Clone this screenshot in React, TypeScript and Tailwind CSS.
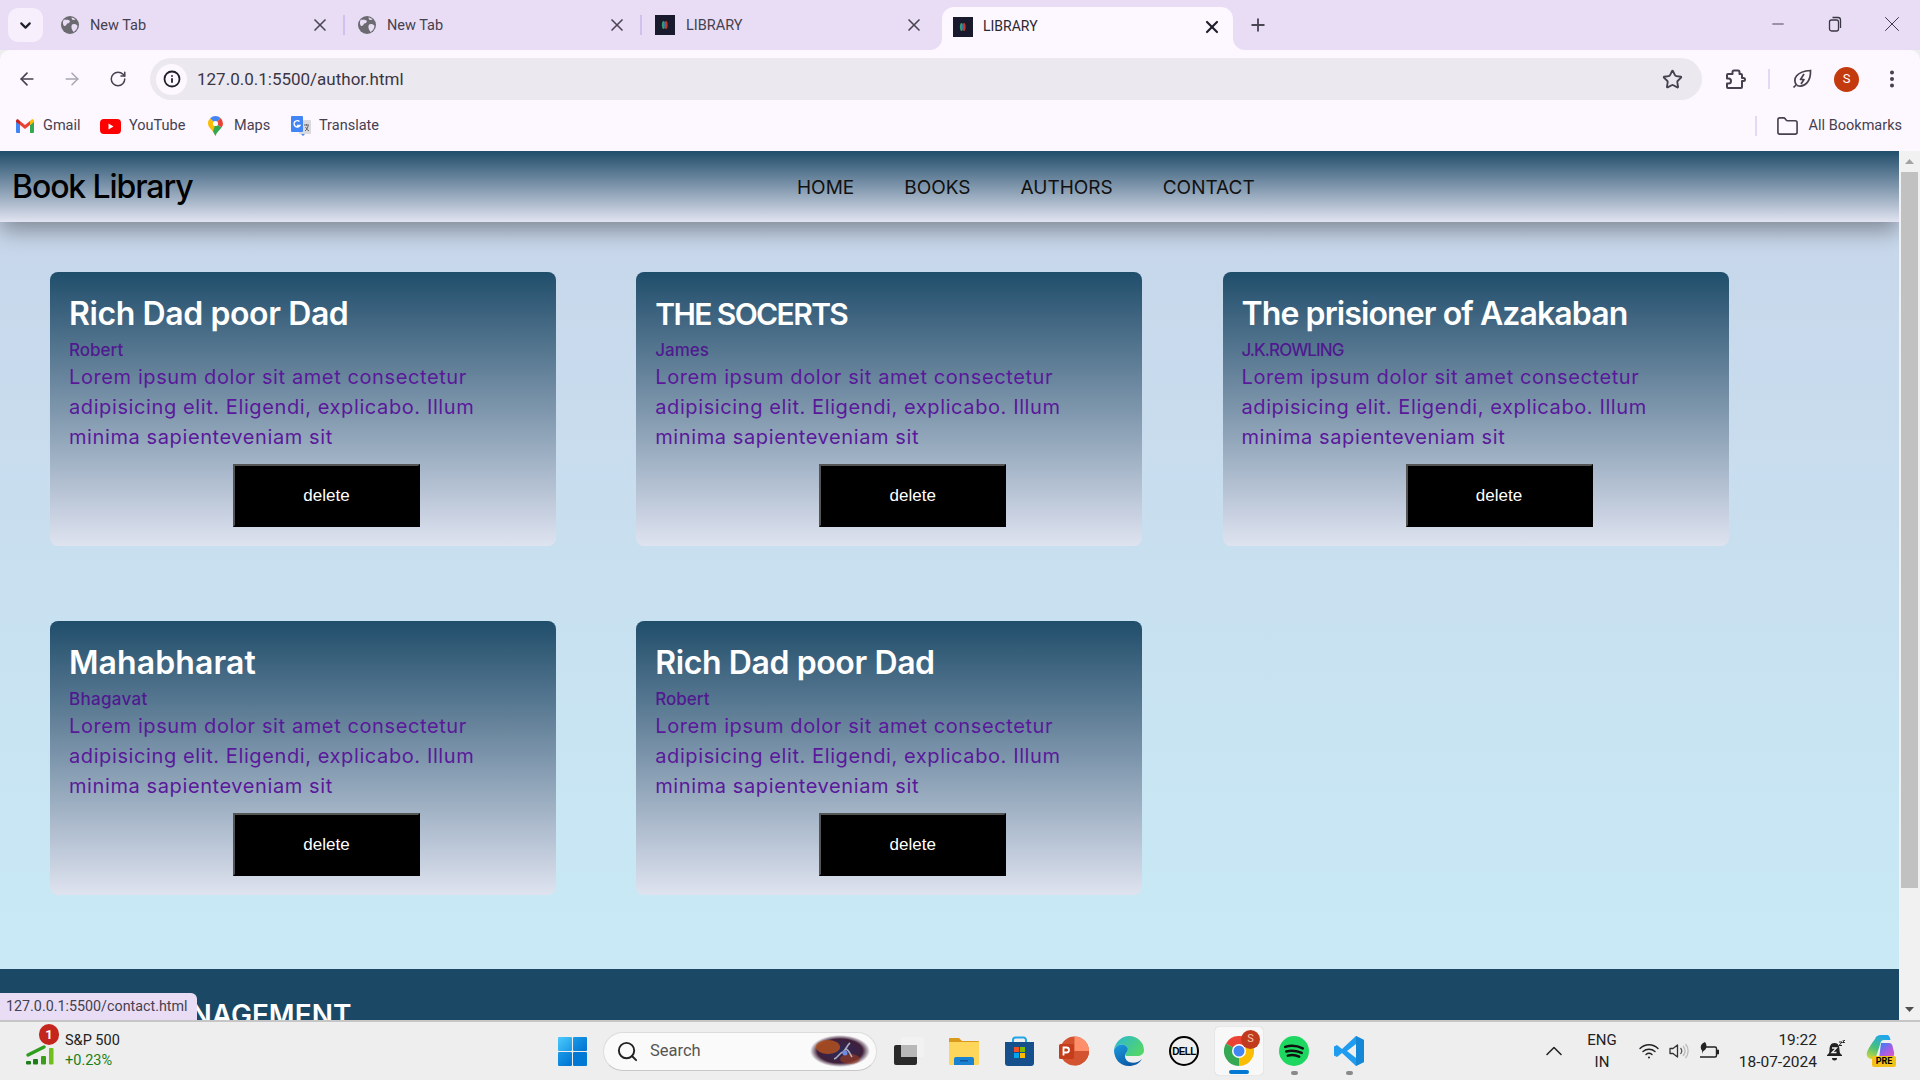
import React from "react";
import { ArrowLeft, ArrowRight, RotateCw, Info, Star, EllipsisVertical, X, Plus, ChevronDown, ChevronUp, Minus, Folder, Search } from "lucide-react";

const ui = "font-['Roboto','Liberation_Sans',sans-serif]";
const pg = "font-['Inter','Open_Sans',sans-serif]";

const Favicon = () => (
  <svg width="20" height="20" viewBox="0 0 20 20" className="shrink-0">
    <rect width="20" height="20" fill="#1a1a2e" />
    <ellipse cx="8.5" cy="10" rx="1.6" ry="4" fill="#2e9e6b" />
    <ellipse cx="11" cy="10" rx="1.6" ry="4" fill="#c0392b" />
    <ellipse cx="10" cy="10" rx="0.9" ry="3" fill="#2b6fbf" />
  </svg>
);

const Tab = ({ title, icon, sep }: { title: string; icon: React.ReactNode; sep?: boolean }) => (
  <div className="w-[297px] h-[34px] mt-[8px] flex items-center relative shrink-0">
    <div className="w-[13px] shrink-0" />
    {icon}
    <span className="ml-[11px] mt-[1px] text-[14.5px] text-[#45414f] flex-1">{title}</span>
    <X size={20} strokeWidth={2} className="text-[#4a4654] mr-[15px]" />
    {sep && <div className="w-[2px] h-[20px] bg-[#cfc0f0] absolute right-0 top-[7px]" />}
  </div>
);

const GlobeIcon = () => (
  <svg width="18" height="18" viewBox="0 0 18 18" className="shrink-0">
    <circle cx="9" cy="9" r="9" fill="#6a6a70" />
    <path d="M3 3.500c2 .5 4-.5 5.500 1 1 1.500-.5 3-2.500 3-.5 1.500-1.500 3-3 2.500C1.500 8 1.500 5.500 3 3.500z" fill="#e9ddf5" />
    <path d="M11 8.500c2-1 4-.5 5.500 1 0 3-2 5.500-4 6.500-1-2-3-4-1.500-7.500z" fill="#e9ddf5" />
    <path d="M10.500 1.500c1.500.3 3 1 4 2-1 .5-2.500.5-3.500 0z" fill="#e9ddf5" />
  </svg>
);

const Gmail = () => (
  <svg width="18" height="14" viewBox="0 0 18 14">
    <path d="M0 2v11a1 1 0 0 0 1 1h3V6z" fill="#4285f4" />
    <path d="M18 2v11a1 1 0 0 1-1 1h-3V6z" fill="#34a853" />
    <path d="M4 2 9 6l5-4v4L9 10 4 6z" fill="#ea4335" />
    <path d="M14 2l1.600-1.400c.9-.7 2.400 0 2.400 1.300V3l-4 3z" fill="#fbbc04" />
    <path d="M4 2 2.400.6C1.500-.1 0 .6 0 1.900V3l4 3z" fill="#c5221f" />
  </svg>
);
const Youtube = () => (
  <svg width="21" height="15" viewBox="0 0 21 15">
    <rect width="21" height="15" rx="4" fill="#f00" />
    <path d="M8.500 4.500v6l5-3z" fill="#fff" />
  </svg>
);
const Maps = () => (
  <svg width="15" height="20" viewBox="0 0 15 20">
    <path d="M7.500 20C6 15 0 12 0 7.500a7.400 7.400 0 0 1 2.200-5.300L7.500 7.500z" fill="#fbbc04" />
    <path d="M2.200 2.200A7.500 7.500 0 0 1 7.500 0c2 0 3.700.8 5 2L7.500 7.500z" fill="#4285f4" />
    <path d="M12.500 2A7.400 7.400 0 0 1 15 7.500c0 1.500-.6 2.800-1.400 4L7.500 7.500z" fill="#ea4335" />
    <path d="M13.600 11.500C11.500 14.500 8.500 16.500 7.500 20L5 15.500l2.500-8z" fill="#34a853" />
    <circle cx="7.500" cy="7.500" r="2.600" fill="#fff" />
  </svg>
);
const Translate = () => (
  <svg width="20" height="20" viewBox="0 0 20 20">
    <rect x="8" y="4" width="12" height="14" rx="1" fill="#d9d9de" />
    <path d="M10 18l2 2 2-2z" fill="#4285f4" />
    <path d="M13 9h5M15.500 8v1.500M14 15c2-1.500 3-3.500 3-5.500M14.500 11c.8 1.800 2 3 3.500 4" stroke="#666" strokeWidth="1" fill="none" />
    <rect width="12" height="16" rx="1" fill="#4285f4" />
    <path d="M8.500 5.500A3.200 3.200 0 1 0 9 9.500H6" stroke="#fff" strokeWidth="1.400" fill="none" />
  </svg>
);
const Bm = ({ icon, label, w, gap }: { icon: React.ReactNode; label: string; w: number; gap: string }) => (
  <div className="flex items-center h-[24px] shrink-0" style={{ width: w }}>
    {icon}
    <span className={`${gap} text-[14.5px] text-[#45414f]`}>{label}</span>
  </div>
);

const Win = () => (
  <svg width="29" height="29" viewBox="0 0 28 28" className="shrink-0">
    <defs>
      <linearGradient id="w1" x1="0" y1="0" x2="1" y2="1"><stop offset="0" stopColor="#4cc9fb" /><stop offset="1" stopColor="#1a9ae8" /></linearGradient>
      <linearGradient id="w2" x1="0" y1="0" x2="1" y2="1"><stop offset="0" stopColor="#1a9ae8" /><stop offset="1" stopColor="#0073d1" /></linearGradient>
    </defs>
    <rect x="0" y="0" width="13.500" height="13.500" rx="1" fill="url(#w1)" />
    <rect x="14.500" y="0" width="13.500" height="13.500" rx="1" fill="url(#w2)" />
    <rect x="0" y="14.500" width="13.500" height="13.500" rx="1" fill="url(#w2)" />
    <rect x="14.500" y="14.500" width="13.500" height="13.500" rx="1" fill="#0078d4" />
  </svg>
);

const TaskSlot = ({ children, active, dot }: { children: React.ReactNode; active?: boolean; dot?: boolean }) => (
  <div className={`h-[48px] rounded-[4px] flex items-center justify-center relative shrink-0 ${active ? "w-[48px] mx-[3.500px] bg-[#f8f8f8] shadow-[0_0_1px_rgba(0,0,0,0.25)]" : "w-[55px]"}`}>
    {children}
    {active && <div className="absolute bottom-[1px] left-[14px] w-[20px] h-[4px] rounded-full bg-[#0078d4]" />}
    {dot && <div className="absolute -bottom-[0px] left-[24px] w-[7px] h-[4px] rounded-full bg-[#8a8a8a]" />}
  </div>
);

const Books = [
  { t: "Rich Dad poor Dad", a: "Robert", tc: "text-[32px] tracking-[-0.4px]", ac: "" },
  { t: "THE SOCERTS", a: "James", tc: "text-[30px] tracking-[-1.6px]", ac: "" },
  { t: "The prisioner of Azakaban", a: "J.K.ROWLING", tc: "text-[32px] tracking-[-0.9px]", ac: "tracking-[-0.9px]" },
  { t: "Mahabharat", a: "Bhagavat", tc: "text-[32px] tracking-[0.1px]", ac: "tracking-[0.3px]" },
  { t: "Rich Dad poor Dad", a: "Robert", tc: "text-[32px] tracking-[-0.4px]", ac: "" },
];

const Card = ({ t, a, tc, ac }: { t: string; a: string; tc: string; ac: string }) => (
  <div className="w-[506px] h-[274px] rounded-[8px] bg-gradient-to-b from-[#1f4e6b] to-[#dfe3f0] pl-[19px] pr-[12px] pt-[23px]">
    <h2 className={`${pg} leading-[38px] font-semibold ${tc} text-white`}>{t}</h2>
    <p className={`${pg} text-[17px] leading-[24px] font-medium text-[#4f1a8f] mt-[5px] ${ac}`}>{a}</p>
    <p className={`${pg} text-[20px] leading-[30px] tracking-[0.6px] text-[#5a189a]`}>
      Lorem ipsum dolor sit amet consectetur adipisicing elit. Eligendi, explicabo. Illum minima sapienteveniam sit
    </p>
    <button className="ml-[164px] mt-[12px] block w-[187px] h-[63px] bg-black text-white text-[17px] font-['Liberation_Sans',sans-serif] border-2 border-solid border-t-[#555] border-l-[#555] border-r-black border-b-black">
      delete
    </button>
  </div>
);

export default function App() {
  return (
    <div className={`${ui} w-[1920px] h-[1080px] flex flex-col overflow-hidden bg-[#eeeeee]`}>
      {/* tab strip */}
      <div className="h-[50px] bg-[#e9ddf5] flex shrink-0 pl-[8px]">
        <div className="w-[35px] h-[34px] mt-[8px] rounded-[10px] bg-[#f7effc] flex items-center justify-center shrink-0">
          <ChevronDown size={17} strokeWidth={3} className="text-[#1f1f2a]" />
        </div>
        <div className="w-[5px] shrink-0" />
        <Tab title="New Tab" icon={<GlobeIcon />} sep />
        <Tab title="New Tab" icon={<GlobeIcon />} sep />
        <Tab title="LIBRARY" icon={<Favicon />} />
        <div className="w-[3px]" />
        <div className="w-[291px] h-[43px] mt-[7px] rounded-t-[12px] bg-[#fdf7ff] flex items-center pl-[11px] pb-[4px] relative shrink-0">
          <svg width="12" height="12" viewBox="0 0 12 12" className="absolute -left-[12px] bottom-0"><path d="M12 0v12H0a12 12 0 0 0 12-12z" fill="#fdf7ff" /></svg>
          <svg width="12" height="12" viewBox="0 0 12 12" className="absolute -right-[12px] bottom-0"><path d="M0 0v12h12A12 12 0 0 1 0 0z" fill="#fdf7ff" /></svg>
          <Favicon />
          <span className="ml-[10px] text-[14px] text-[#2b2833] flex-1">LIBRARY</span>
          <X size={20} strokeWidth={2.6} className="text-[#1f1f2a] mr-[11px]" />
        </div>
        <div className="ml-[15px] mt-[15px] h-[18px]"><Plus size={20} strokeWidth={2.2} className="text-[#4a4654]" /></div>
        <div className="flex-1" />
        <div className="flex items-center h-[50px] pb-[2px] text-[#3a3644]">
          <div className="w-[57px] flex justify-center"><Minus size={18} strokeWidth={1.2} /></div>
          <div className="w-[57px] flex justify-center">
            <svg width="14" height="16" viewBox="0 0 14 16" fill="none" stroke="#3a3644" strokeWidth="1.300">
              <rect x="1.500" y="4" width="9" height="11" rx="2" />
              <path d="M4.500 1.500H10A2.500 2.500 0 0 1 12.500 4v8" />
            </svg>
          </div>
          <div className="w-[57px] flex justify-center"><X size={26} strokeWidth={0.9} /></div>
        </div>
      </div>

      {/* toolbar + bookmarks */}
      <div className="h-[101px] bg-[#fdf7ff] rounded-t-[10px] shrink-0 flex flex-col">
        <div className="h-[58px] flex items-center shrink-0">
          <div className="w-[150px] flex items-center pl-[17px] shrink-0">
            <ArrowLeft size={20} strokeWidth={2} className="text-[#45414f]" />
            <ArrowRight size={20} strokeWidth={1.8} className="text-[#a9a6b0] ml-[25px]" />
            <RotateCw size={18} strokeWidth={2} className="text-[#45414f] ml-[27px]" />
          </div>
          <div className="w-[1552px] h-[42px] rounded-full bg-[#ece8f0] flex items-center pl-[6px] pr-[19px] shrink-0">
            <div className="w-[31px] h-[31px] rounded-full bg-[#fdf7ff] flex items-center justify-center shrink-0">
              <Info size={18} strokeWidth={2.4} className="text-[#1f1f2a]" />
            </div>
            <span className="ml-[10px] mt-[2px] text-[17px] text-[#3a3644] flex-1">127.0.0.1:5500/author.html</span>
            <Star size={21} strokeWidth={2.1} className="text-[#45414f]" />
          </div>
          <svg width="22" height="21" viewBox="0 0 22 21" fill="none" stroke="#45414f" strokeWidth="2" strokeLinejoin="round" className="ml-[23px] shrink-0">
            <path d="M3 5h4.500V3a1.500 1.500 0 0 1 1.500-1.500h4A1.500 1.500 0 0 1 14.500 3v2H16a1 1 0 0 1 1 1v3h1.500a1.500 1.500 0 0 1 0 3H17v6a1 1 0 0 1-1 1H3a1 1 0 0 1-1-1v-3.500h1.500a2.500 2.500 0 0 0 0-5H2V6a1 1 0 0 1 1-1z" />
          </svg>
          <div className="w-[2px] h-[20px] bg-[#e4d9f5] ml-[21px] shrink-0" />
          <svg width="20" height="20" viewBox="0 0 20 20" fill="none" stroke="#45414f" strokeWidth="1.700" className="ml-[22px] shrink-0">
            <path d="M4 15.500C1 10 4 2.500 18.500 1.500 19 12 13 19 5 16.500" />
            <path d="M1.500 18.500 5 15" />
            <path d="M12 5 8.500 10.500h3.500L9 15" strokeLinejoin="round" />
          </svg>
          <div className="w-[25px] h-[25px] rounded-full bg-[#c23a0e] text-white text-[13px] flex items-center justify-center ml-[22px] shrink-0">S</div>
          <EllipsisVertical size={22} strokeWidth={2.4} className="text-[#45414f] ml-[22px] shrink-0" />
        </div>
        <div className="flex-1 flex items-center pl-[16px] pb-[7px] pr-[18px]">
          <Bm icon={<Gmail />} label="Gmail" w={84} gap="ml-[9px]" />
          <Bm icon={<Youtube />} label="YouTube" w={108} gap="ml-[8px]" />
          <Bm icon={<Maps />} label="Maps" w={83} gap="ml-[11px]" />
          <Bm icon={<Translate />} label="Translate" w={100} gap="ml-[8px]" />
          <div className="flex-1" />
          <div className="w-[2px] h-[20px] bg-[#e4d9f5]" />
          <Folder size={23} strokeWidth={1.7} className="text-[#45414f] ml-[19px]" />
          <span className="ml-[10px] text-[14.5px] text-[#45414f]">All Bookmarks</span>
        </div>
      </div>

      {/* viewport */}
      <div className="h-[869px] flex shrink-0 relative overflow-hidden">
        <div className="w-[1899px] shrink-0 h-[869px] overflow-hidden bg-gradient-to-b from-[#c8d5ea] to-[#c8ebf6] flex flex-col">
          <nav className="h-[71px] shrink-0 flex items-center relative bg-gradient-to-b from-[#1f4e6b] to-[#e2e4f1] shadow-[0_8px_22px_rgba(0,0,0,0.38)]">
            <span className={`${pg} text-black text-[32px] font-medium tracking-[-1.1px] ml-[12px] w-[785px] shrink-0`}>Book Library</span>
            <div className={`${pg} flex text-[19px] leading-[30px] text-[#111] gap-x-[50px] pt-[2px]`}>
              <span>HOME</span><span>BOOKS</span><span>AUTHORS</span><span>CONTACT</span>
            </div>
          </nav>
          <div className="grid grid-cols-[506px_506px_506px] gap-x-[80.250px] gap-y-[75px] pl-[50px] pt-[50px]">
            {Books.map((b, i) => <Card key={i} {...b} />)}
          </div>
          <footer className="mt-[74px] flex-1 bg-[#1b4965] pl-[19px] pt-[29px] overflow-hidden">
            <span className={`${pg} block text-[28px] leading-[34px] font-semibold text-white whitespace-nowrap`}>LIBRARY MANAGEMENT</span>
          </footer>
        </div>
        <div className="w-[21px] h-[869px] bg-[#f1f1f1] flex flex-col items-center shrink-0">
          <div className="h-[21px] shrink-0 flex items-center justify-center">
            <svg width="9" height="5" viewBox="0 0 9 5"><path d="M4.500 0 9 5H0z" fill="#a3a3a3" /></svg>
          </div>
          <div className="w-[17px] h-[716px] bg-[#c1c1c1]" />
          <div className="flex-1" />
          <div className="h-[21px] shrink-0 flex items-center justify-center">
            <svg width="9" height="5" viewBox="0 0 9 5"><path d="M4.500 5 9 0H0z" fill="#505050" /></svg>
          </div>
        </div>
        <div className="absolute left-0 bottom-0 w-[197px] h-[27px] bg-[#e9ddf5] rounded-tr-[6px] pl-[6px] flex items-center text-[14.3px] text-[#45414f] whitespace-nowrap">
          127.0.0.1:5500/contact.html
        </div>
      </div>

      {/* taskbar */}
      <div className="h-[60px] bg-[#eeeeee] border-t-2 border-[#c6c6c6] flex items-center shrink-0">
        <div className="w-[558px] flex items-center pl-[25px] shrink-0 relative">
          <svg width="30" height="30" viewBox="0 0 30 30" className="shrink-0">
            <path d="M3 19 19 11" stroke="#2f9e1f" strokeWidth="3.500" strokeLinecap="round" />
            <rect x="1" y="25" width="5" height="3.500" rx="1" fill="#1a7f16" />
            <rect x="8" y="23" width="5" height="5.500" rx="1" fill="#1a7f16" />
            <rect x="16" y="20" width="5" height="8.500" rx="1" fill="#3a9e1a" />
            <rect x="24" y="12" width="4.500" height="16.500" rx="1" fill="#70c01c" />
          </svg>
          <div className="absolute left-[39px] -top-[7px] w-[20px] h-[21px] rounded-full bg-[#c4261d] text-white text-[13px] font-bold flex items-center justify-center">1</div>
          <div className="ml-[10px] flex flex-col text-[14.5px] leading-[20px]">
            <span className="text-[#222]">S&amp;P 500</span>
            <span className="text-[#1a7f16]">+0.23%</span>
          </div>
        </div>
        <Win />
        <div className="ml-[16px] w-[274px] h-[39px] rounded-full bg-[#fafafa] border border-[#dcdcdc] border-b-[#c8c8c8] flex items-center pl-[12px] pr-[6px] shrink-0">
          <Search size={23} strokeWidth={2} className="text-[#222] shrink-0" />
          <span className="ml-[11px] text-[16.5px] text-[#555] flex-1">Search</span>
          <svg width="60" height="32" viewBox="0 0 60 32" className="shrink-0">
            <defs>
              <radialGradient id="nb" cx="0.5" cy="0.5" r="0.5">
                <stop offset="0" stopColor="#2c2a5c" /><stop offset="0.75" stopColor="#3f1f3a" /><stop offset="1" stopColor="#fafafa" />
              </radialGradient>
            </defs>
            <ellipse cx="30" cy="16" rx="30" ry="16" fill="url(#nb)" />
            <ellipse cx="18" cy="12" rx="12" ry="7" fill="#b0501f" opacity="0.85" />
            <ellipse cx="40" cy="24" rx="10" ry="5" fill="#a0401f" opacity="0.6" />
            <path d="M24 24c4-1 5-6 9-7M33 17c3-2 4-7 7-9M36 14c3 1 4 5 6 8" fill="none" stroke="#d3dae6" strokeWidth="1.600" opacity="0.75" />
            <circle cx="35" cy="18" r="2.500" fill="#6e8be0" />
          </svg>
        </div>
        <div className="flex items-center ml-[4.500px] shrink-0">
          <TaskSlot>
            <svg width="30" height="28" viewBox="0 0 30 28">
              <rect x="0" y="8" width="23" height="20" rx="2" fill="#2a2a2a" />
              <rect x="7" y="0" width="23" height="20" rx="2" fill="#f2f2f2" />
              <rect x="7" y="8" width="16" height="12" fill="#b8b8b8" />
            </svg>
          </TaskSlot>
          <TaskSlot>
            <svg width="30" height="28" viewBox="0 0 30 28">
              <path d="M0 2a1 1 0 0 1 1-1h9l3 3h16a1 1 0 0 1 1 1v3H0z" fill="#d99a1c" />
              <path d="M0 5h30v22a1 1 0 0 1-1 1H1a1 1 0 0 1-1-1z" fill="#ffd65c" />
              <path d="M5 22a2 2 0 0 1 2-2h16a2 2 0 0 1 2 2v6H5z" fill="#1a82d0" />
              <rect x="11" y="23" width="8" height="1.500" fill="#0c5a9c" />
            </svg>
          </TaskSlot>
          <TaskSlot>
            <svg width="29" height="30" viewBox="0 0 29 30">
              <path d="M8 8V4a2.500 2.500 0 0 1 2.500-2.500h8A2.500 2.500 0 0 1 21 4v4" fill="none" stroke="#24a5e5" strokeWidth="2" />
              <path d="M0 6h29v21a3 3 0 0 1-3 3H3a3 3 0 0 1-3-3z" fill="#15508c" />
              <rect x="9" y="11" width="5" height="5" fill="#f25022" />
              <rect x="15" y="11" width="5" height="5" fill="#7fba00" />
              <rect x="9" y="17" width="5" height="5" fill="#00a4ef" />
              <rect x="15" y="17" width="5" height="5" fill="#ffb900" />
            </svg>
          </TaskSlot>
          <TaskSlot>
            <svg width="30" height="30" viewBox="0 0 30 30">
              <circle cx="15.500" cy="15" r="14.500" fill="#d35230" />
              <path d="M15.500.5A14.500 14.500 0 0 1 30 15H15.500z" fill="#ff8f6b" />
              <path d="M15.500 15H30A14.500 14.500 0 0 1 15.500 29.500z" fill="#d35230" />
              <rect x="0" y="8" width="15" height="15" rx="1.500" fill="#c43e1c" />
              <path d="M4.500 19.500v-8h3a2.500 2.500 0 0 1 0 5h-3" stroke="#fff" strokeWidth="1.800" fill="none" />
            </svg>
          </TaskSlot>
          <TaskSlot>
            <svg width="30" height="30" viewBox="0 0 30 30">
              <defs>
                <linearGradient id="ed" x1="0" y1="0" x2="1" y2="0.600"><stop offset="0" stopColor="#2cb5d6" /><stop offset="1" stopColor="#52d66a" /></linearGradient>
                <linearGradient id="ed2" x1="0" y1="0" x2="0.600" y2="1"><stop offset="0" stopColor="#1a9be0" /><stop offset="1" stopColor="#0c59a4" /></linearGradient>
              </defs>
              <path d="M0 14C1 6 8 0 15 0c9 0 15 7 15 14 0 4-3 6-7 6H13c-2 0-2-2-1-3 2-2 3-5 0-7C8 7 2 9 0 14z" fill="url(#ed)" />
              <path d="M0 14c2-5 8-7 12-4 3 2 2 5 0 7-2 3-1 7 3 9 5 2 10 0 13-3-3 5-8 7-13 7C6 30 0 23 0 14z" fill="url(#ed2)" />
            </svg>
          </TaskSlot>
          <TaskSlot>
            <div className="w-[30px] h-[30px] rounded-full border-2 border-black flex items-center justify-center text-[10px] font-bold text-black tracking-[-0.6px] font-['Liberation_Sans',sans-serif]">DELL</div>
          </TaskSlot>
          <TaskSlot active>
            <div className="relative">
              <svg width="30" height="30" viewBox="0 0 30 30" className="block">
                <path d="M15 15 2 7.500A15 15 0 0 1 28 7.500z" fill="#ea4335" />
                <path d="M15 15 28 7.500A15 15 0 0 1 15 30z" fill="#fbbc04" />
                <path d="M15 15v15A15 15 0 0 1 2 7.500z" fill="#34a853" />
                <circle cx="15" cy="15" r="7" fill="#fff" />
                <circle cx="15" cy="15" r="5.500" fill="#4285f4" />
              </svg>
              <div className="absolute -right-[6px] -top-[6px] w-[19px] h-[19px] rounded-full bg-[#c23a1e] text-[#f6c7a8] text-[11px] flex items-center justify-center">S</div>
            </div>
          </TaskSlot>
          <TaskSlot dot>
            <svg width="30" height="30" viewBox="0 0 29 29">
              <circle cx="14.500" cy="14.500" r="14.500" fill="#1ed760" />
              <path d="M6 10.500c5-1.500 12-1 17 1.500M7 15c4-1 10-.7 15 1.400M8.500 19c3-.8 8-.5 11 1" stroke="#111" strokeWidth="2.400" strokeLinecap="round" fill="none" />
            </svg>
          </TaskSlot>
          <TaskSlot dot>
            <svg width="30" height="30" viewBox="0 0 30 30">
              <path d="M22 0 30 4v22l-8 4L8 17l-5 4-3-1.500v-9L3 9l5 4z" fill="#1f9cf0" />
              <path d="M22 0 30 4v22l-8 4z" fill="#0f7fcb" opacity="0.7" />
              <path d="M22 8v14l-9-7z" fill="#eeeeee" />
            </svg>
          </TaskSlot>
        </div>
        <div className="flex-1" />
        <div className="flex items-center shrink-0 pr-[24px]">
          <ChevronUp size={28} strokeWidth={1.3} className="text-[#222] shrink-0" />
          <div className="ml-[16px] w-[36px] text-center text-[15px] leading-[22px] text-[#222]">ENG<br />IN</div>
          <svg width="20" height="16" viewBox="0 0 20 16" fill="none" stroke="#222" strokeWidth="1.400" strokeLinecap="round" className="ml-[19px] shrink-0">
            <path d="M1 5.500c5-5 13-5 18 0M4 8.500c3.500-3 8.500-3 12 0M7 11.500c1.800-1.500 4.200-1.500 6 0" />
            <circle cx="10" cy="14.500" r="1" fill="#222" stroke="none" />
          </svg>
          <svg width="20" height="16" viewBox="0 0 20 16" fill="none" strokeWidth="1.300" className="ml-[10px] shrink-0">
            <path d="M1 5.500h3L8.500 2v12L4 10.500H1z" stroke="#333" strokeLinejoin="round" />
            <path d="M11.500 5c1.500 1.800 1.500 4.200 0 6" stroke="#555" />
            <path d="M14 3c2.500 3 2.500 7 0 10M16.500 1c3.500 4 3.500 10 0 14" stroke="#bbb" />
          </svg>
          <svg width="20" height="18" viewBox="0 0 20 18" fill="none" stroke="#222" strokeWidth="1.400" className="ml-[10px] shrink-0">
            <path d="M7 5h9a1.500 1.500 0 0 1 1.500 1.500v7A1.500 1.500 0 0 1 16 15H1" />
            <path d="M18 8.500h1.500v3H18" fill="#222" />
            <path d="M6 0C2 1.500.5 5 3 8.500 3.500 10 3 11 3 12c.5-1.500 1-3 3-4C8 6 8 2.500 6 0z" fill="#222" stroke="none" />
          </svg>
          <div className="ml-[18px] w-[80px] text-right text-[15.5px] leading-[22px] text-[#222] whitespace-nowrap">19:22<br />18-07-2024</div>
          <svg width="18" height="22" viewBox="0 0 18 22" className="ml-[10px] shrink-0">
            <path d="M7.500 3C3.500 3 2.500 6.500 2.500 10c0 3-1 4-2.500 5v1h15v-1c-1.500-1-2.500-2-2.500-5 0-3.500-1-7-5-7z" fill="#222" />
            <path d="M5 18h5a2.500 2.500 0 0 1-5 0z" fill="#222" />
            <path d="M5 8h4.500L5 12.500h4.500" stroke="#eee" strokeWidth="1.300" fill="none" />
            <path d="M12 2h3l-3 3.500h3M15.500 0h2.300l-2.300 2.500h2.300" stroke="#222" strokeWidth="1" fill="none" />
          </svg>
          <div className="ml-[21px] relative w-[30px] h-[32px] shrink-0">
            <svg width="30" height="26" viewBox="0 0 30 26" className="block">
              <defs>
                <linearGradient id="cp" x1="0.600" y1="0" x2="0.200" y2="1"><stop offset="0" stopColor="#1ea7ee" /><stop offset="0.55" stopColor="#4ac07a" /><stop offset="1" stopColor="#c8d83c" /></linearGradient>
                <linearGradient id="cp2" x1="0.200" y1="0" x2="1" y2="1"><stop offset="0" stopColor="#3f7ff0" /><stop offset="0.5" stopColor="#a85ce6" /><stop offset="1" stopColor="#ee5cae" /></linearGradient>
              </defs>
              <path d="M15 8h8c2 0 3 1 3.500 3l1.500 6c1 4-2 7-5 7H13z" fill="url(#cp2)" />
              <path d="M9 4c1-3 3-4 6-4h6c2 0 3 2 3.500 5H18c-2 0-3 1-3.500 3L11 19c-.6 3-3 5-5 5-4 0-6-3-5-7C3 12 6 8 9 4z" fill="url(#cp)" />
            </svg>
            <div className="absolute left-[6px] bottom-0 w-[24px] h-[11px] rounded-[2px] bg-[#f2c21a] text-[9px] leading-[11px] font-bold text-black text-center">PRE</div>
          </div>
        </div>
      </div>
    </div>
  );
}
